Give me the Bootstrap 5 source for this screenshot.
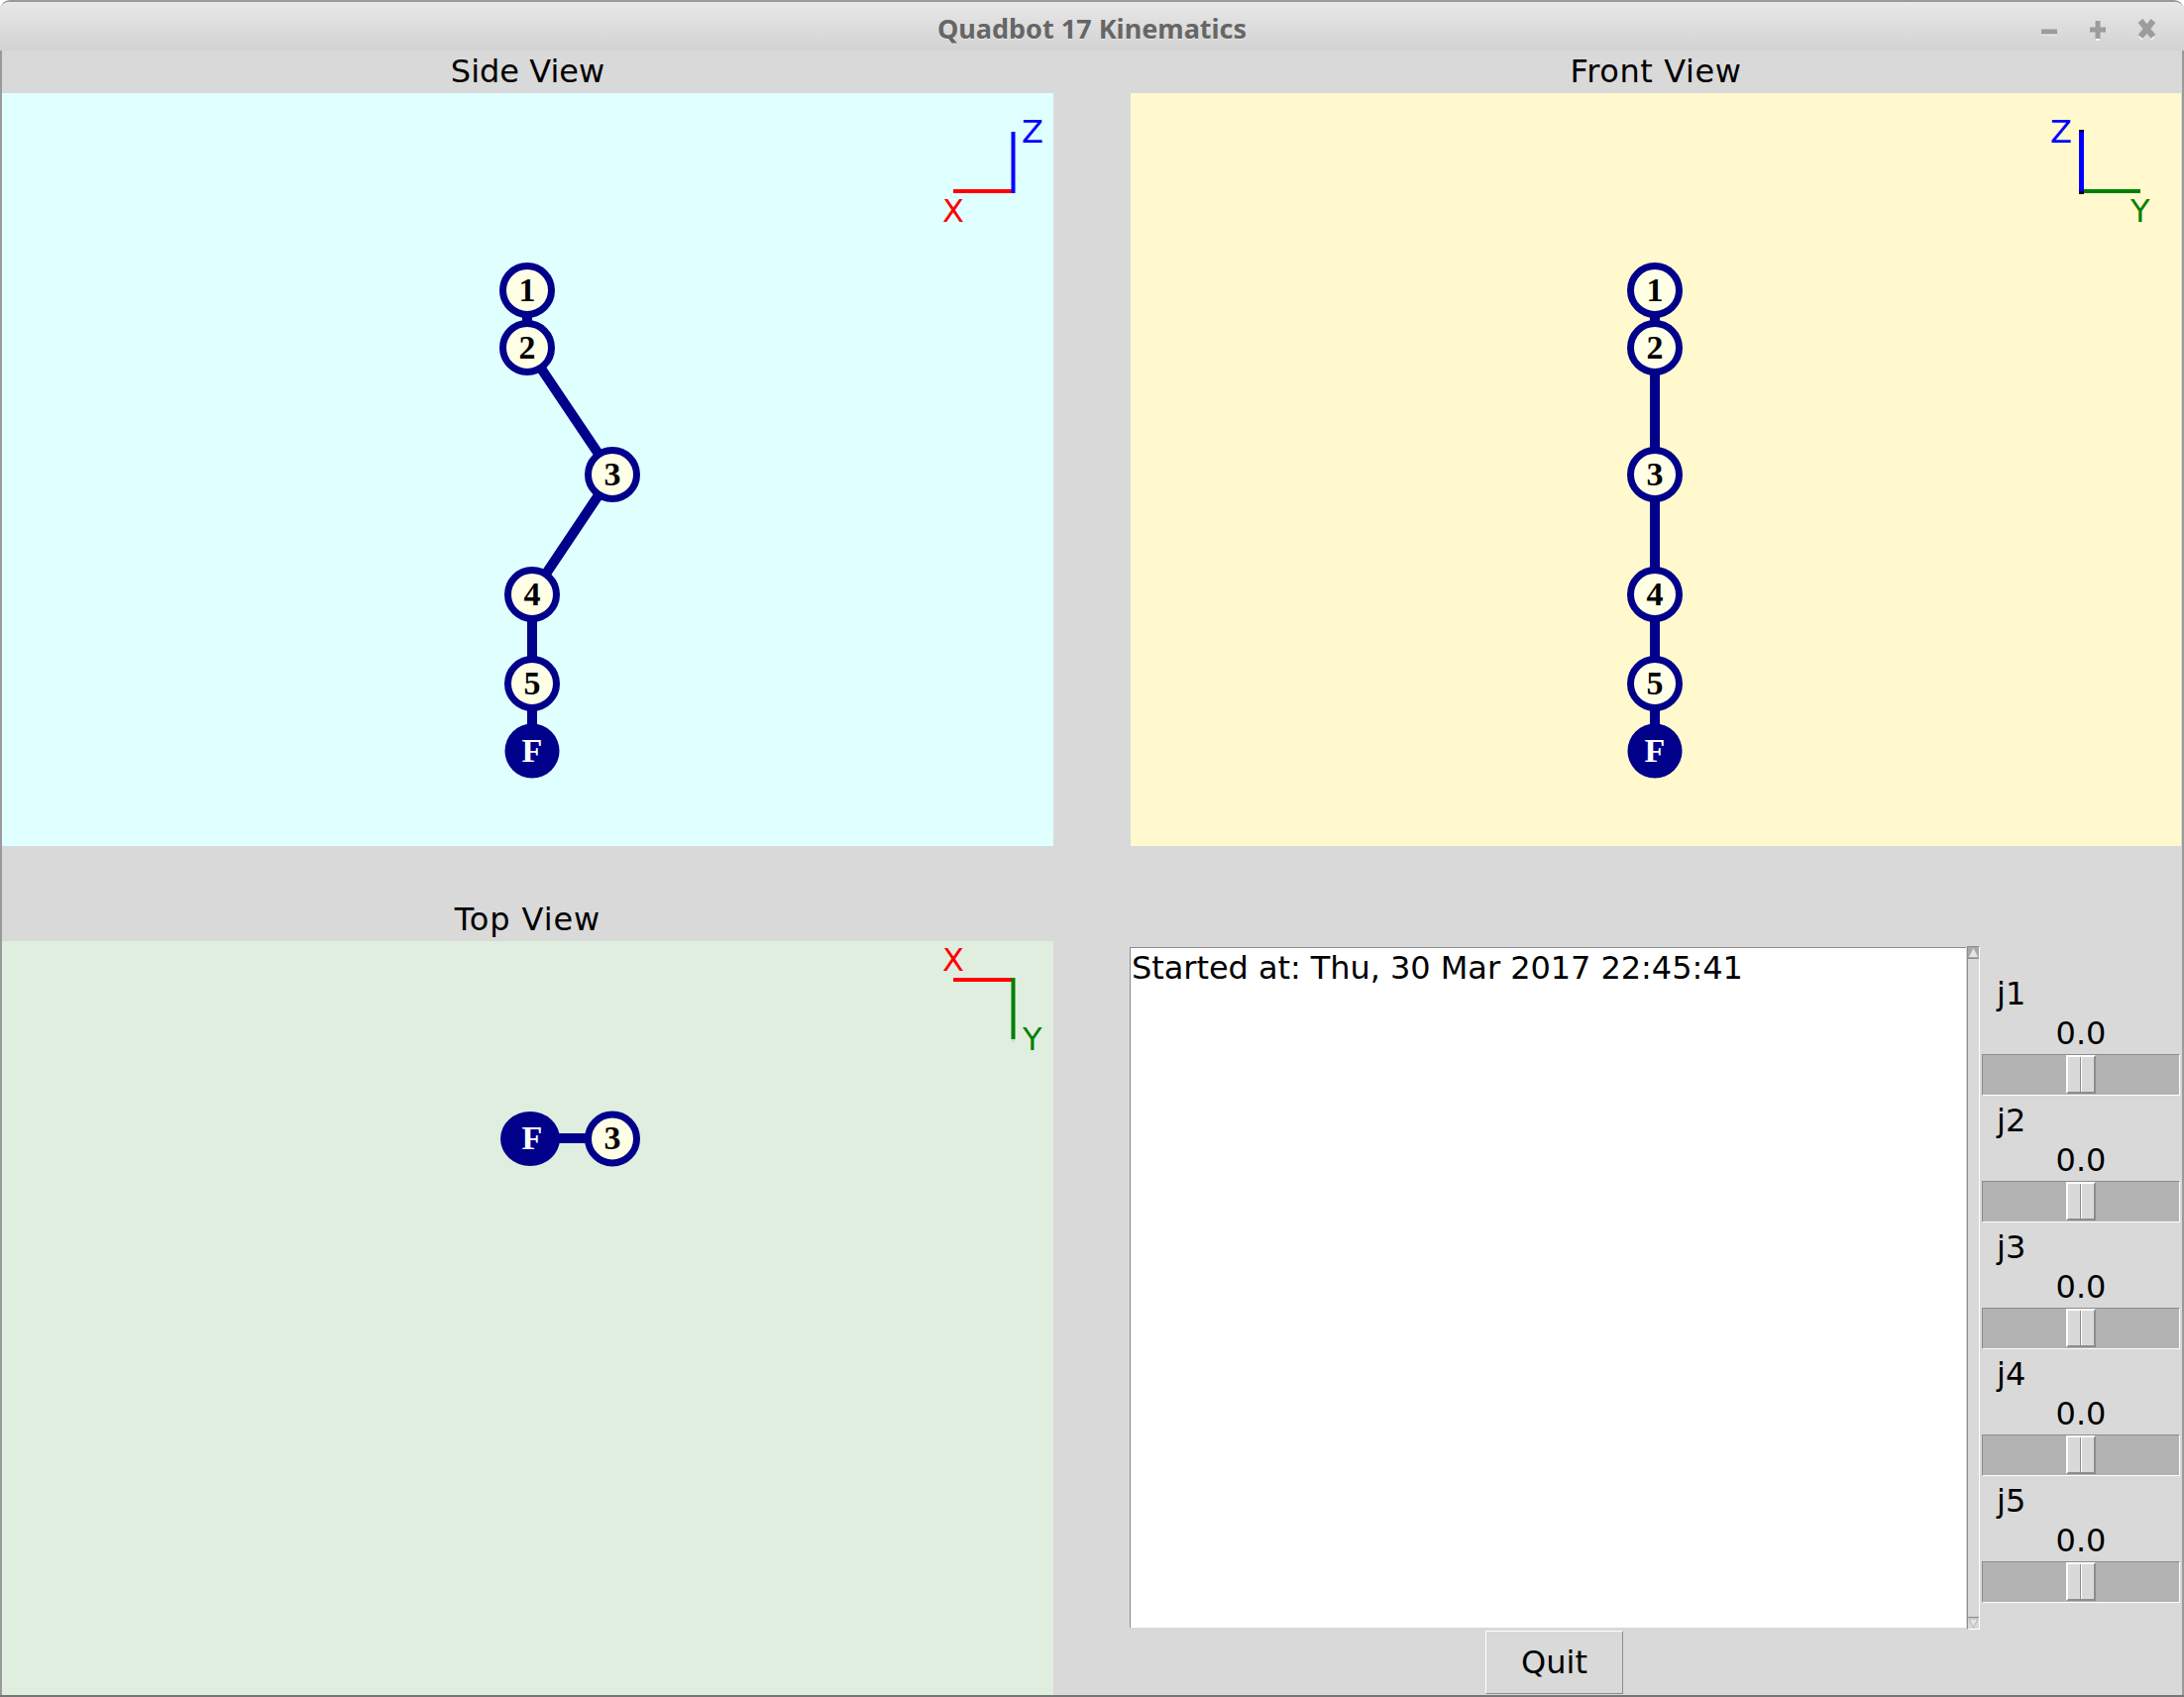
<!DOCTYPE html>
<html lang="en">
<head>
<meta charset="utf-8">
<title>Quadbot 17 Kinematics</title>
<link href="https://cdn.jsdelivr.net/npm/bootstrap@5.3.0/dist/css/bootstrap.min.css" rel="stylesheet">
<style>
html,body{margin:0;height:100%;background:#fff;overflow:hidden}
.tk-window{width:2204px;height:1713px;font-family:"DejaVu Sans",sans-serif;font-size:32px;color:#000;background:#d9d9d9;border-radius:10px 10px 0 0;border-top:2px solid #9a9a9a;border-bottom:2px solid #777;overflow:hidden}
.tk-title{height:49px;background:linear-gradient(#e8e8e8,#d2d2d2);position:relative;flex:none}
.tk-title-text{font-family:"Noto Sans",sans-serif;font-weight:700;font-size:27px;line-height:54px;height:49px;color:#666;text-shadow:0 1px 0 rgba(255,255,255,.35)}
.tk-winbtns{position:absolute;left:2050px;top:14px}
.tk-body{flex:1 1 auto;min-height:0;border-left:2px solid #9a9a9a;border-right:2px solid #9a9a9a;padding-right:1px}
.tk-row-a{height:803px;flex:none}
.tk-row-b{height:804px;flex:none}
.tk-gap{height:53px;flex:none}
.tk-left{width:1061px;flex:none}
.tk-mid{width:78px;flex:none}
.tk-right{width:1060px;flex:none}
.tk-lower{padding-top:48px}
.tk-head{height:43px;line-height:43px;text-align:center;flex:none}
.tk-head-front{letter-spacing:.6px}
.tk-head-top{letter-spacing:.9px}
.tk-canvas{display:block;flex:none}
.tk-cyan{background:#e0ffff}
.tk-yellow{background:#fff9cd}
.tk-green{background:#e0eee0}
.tk-console{height:690px;flex:none}
.tk-text{width:844px;height:687px;margin-top:1px;margin-left:-1px;flex:none;background:#fff;border-top:1px solid #8c8c8c;border-left:1px solid #8c8c8c;padding:0 2px 0 1px;line-height:41px;white-space:pre;letter-spacing:-.05px}
.tk-scroll{width:13px;height:690px;margin-left:1px;flex:none;background:#d9d9d9;border:1px solid #8c8c8c;border-right-color:#fff;border-bottom-color:#fff;display:flex;flex-direction:column;justify-content:space-between}
.tk-sbtn{display:block;width:11px;height:12px;flex:none}
.tk-sliders{width:200px;margin-left:2px;padding-top:23px;flex:none}
.tk-slider-group{height:128px;display:flex;flex-direction:column}
.tk-jlabel{height:44px;line-height:50px;padding-left:15px;flex:none}
.tk-jval{height:42px;line-height:42px;text-align:center;flex:none}
.tk-trough{height:42px;flex:none;background:#b3b3b3;border:1px solid #8c8c8c;border-right-color:#fff;border-bottom-color:#fff;display:flex;justify-content:center}
.tk-thumb{width:30px;height:39px;background:#d9d9d9;border:2px solid #fff;border-right-color:#8c8c8c;border-bottom-color:#8c8c8c;position:relative}
.tk-thumb::after{content:"";position:absolute;left:12px;top:0;bottom:0;width:2px;background:linear-gradient(90deg,#8c8c8c 50%,#fff 50%)}
.tk-quit-row{height:65px;margin-top:1px;flex:none}
.btn.tk-quit{width:139px;height:64px;margin-left:358px;padding:0;background:#d9d9d9;color:#000;font-family:inherit;font-size:32px;border:1px solid;border-color:#fff #8c8c8c #8c8c8c #fff;border-radius:0;line-height:1}
.tk-node-t{font-family:"Liberation Serif",serif;font-weight:700;font-size:34px;text-anchor:middle}
.tk-axis-t{font-family:"DejaVu Sans",sans-serif;font-size:32px}
</style>
</head>
<body>
<div class="tk-window d-flex flex-column">
  <div class="tk-title d-flex justify-content-center">
    <span class="tk-title-text">Quadbot 17 Kinematics</span>
    <svg class="tk-winbtns" width="140" height="28" viewBox="2050 16 140 28">
      <g stroke="#fff" stroke-width="4" fill="none" opacity=".8">
        <path d="M2060 33.500h16M2117 32v9M2160 39l3-3M2173 39l-3-3"/>
      </g>
      <g stroke="#9c9c9c" stroke-width="5" fill="none">
        <path d="M2060 32h16"/>
        <path d="M2109 30h16M2117 21v18"/>
      </g>
      <path d="M2160 21l13 16M2173 21l-13 16" stroke="#9c9c9c" stroke-width="6" fill="none"/>
    </svg>
  </div>
  <div class="tk-body d-flex flex-column">
    <div class="tk-row-a d-flex">
      <div class="tk-left d-flex flex-column">
        <div class="tk-head">Side View</div>
        <svg class="tk-canvas tk-cyan" width="1061" height="760" viewBox="2 94 1061 760">
          <path d="M532 293V351L618 479L537 600V758" fill="none" stroke="#00008b" stroke-width="10"/>
          <g fill="#ffffe6" stroke="#00008b" stroke-width="7">
            <circle cx="532" cy="293" r="24.500"/><circle cx="532" cy="351" r="24.500"/><circle cx="618" cy="479" r="24.500"/><circle cx="537" cy="600" r="24.500"/><circle cx="537" cy="690" r="24.500"/>
          </g>
          <circle cx="537" cy="758" r="27.500" fill="#00008b"/>
          <g class="tk-node-t"><text x="532" y="304">1</text><text x="532" y="362">2</text><text x="618" y="490">3</text><text x="537" y="611">4</text><text x="537" y="701">5</text><text x="537" y="769" fill="#fff">F</text></g>
          <path d="M962 193H1021" stroke="#f00" stroke-width="4"/>
          <path d="M1022.500 133V195" stroke="#00f" stroke-width="4"/>
          <text class="tk-axis-t" x="1031" y="144" fill="#00f">Z</text>
          <text class="tk-axis-t" x="951" y="224" fill="#f00">X</text>
        </svg>
      </div>
      <div class="tk-mid"></div>
      <div class="tk-right d-flex flex-column">
        <div class="tk-head tk-head-front">Front View</div>
        <svg class="tk-canvas tk-yellow" width="1060" height="760" viewBox="1141 94 1060 760">
          <path d="M1670 293V758" fill="none" stroke="#00008b" stroke-width="10"/>
          <g fill="#ffffe6" stroke="#00008b" stroke-width="7">
            <circle cx="1670" cy="293" r="24.500"/><circle cx="1670" cy="351" r="24.500"/><circle cx="1670" cy="479" r="24.500"/><circle cx="1670" cy="600" r="24.500"/><circle cx="1670" cy="690" r="24.500"/>
          </g>
          <circle cx="1670" cy="758" r="27.500" fill="#00008b"/>
          <g class="tk-node-t"><text x="1670" y="304">1</text><text x="1670" y="362">2</text><text x="1670" y="490">3</text><text x="1670" y="611">4</text><text x="1670" y="701">5</text><text x="1670" y="769" fill="#fff">F</text></g>
          <path d="M2103 193H2160" stroke="#008000" stroke-width="4"/>
          <path d="M2100.500 131V196" stroke="#000" stroke-width="5"/>
          <path d="M2100.500 133V193" stroke="#00f" stroke-width="5"/>
          <text class="tk-axis-t" x="2069" y="144" fill="#00f">Z</text>
          <text class="tk-axis-t" x="2150" y="224" fill="#008000">Y</text>
        </svg>
      </div>
    </div>
    <div class="tk-gap"></div>
    <div class="tk-row-b d-flex">
      <div class="tk-left d-flex flex-column">
        <div class="tk-head tk-head-top">Top View</div>
        <svg class="tk-canvas tk-green" width="1061" height="761" viewBox="2 950 1061 761">
          <path d="M535 1149H618" stroke="#00008b" stroke-width="10"/>
          <ellipse cx="535" cy="1149.500" rx="30" ry="27.500" fill="#00008b"/>
          <circle cx="618" cy="1149.500" r="24.500" fill="#ffffe6" stroke="#00008b" stroke-width="7"/>
          <g class="tk-node-t"><text x="618" y="1160">3</text><text x="537" y="1160" fill="#fff">F</text></g>
          <path d="M962 989H1021" stroke="#f00" stroke-width="4"/>
          <path d="M1022.500 987V1049" stroke="#008000" stroke-width="4"/>
          <path d="M1022.500 1049V1052" stroke="#d9d9d9" stroke-width="4"/>
          <text class="tk-axis-t" x="951" y="980" fill="#f00">X</text>
          <text class="tk-axis-t" x="1032" y="1060" fill="#008000">Y</text>
        </svg>
      </div>
      <div class="tk-mid"></div>
      <div class="tk-right tk-lower d-flex flex-column">
        <div class="tk-console d-flex align-items-start">
          <div class="tk-text">Started at: Thu, 30 Mar 2017 22:45:41</div>
          <div class="tk-scroll">
            <svg class="tk-sbtn" viewBox="0 0 11 12"><rect width="11" height="12" fill="#a9a9a9"/><path d="M5.500 1L10 10H1Z" fill="#e4e4e4"/><path d="M0 11.500H11" stroke="#8c8c8c"/></svg>
            <svg class="tk-sbtn" viewBox="0 0 11 12"><rect width="11" height="12" fill="#d9d9d9"/><path d="M5.500 11L10 2H1Z" fill="#e4e4e4" stroke="#999" stroke-width=".6"/><path d="M0 .5H11" stroke="#8c8c8c"/></svg>
          </div>
          <div class="tk-sliders">
            <div class="tk-slider-group"><div class="tk-jlabel">j1</div><div class="tk-jval">0.0</div><div class="tk-trough"><div class="tk-thumb"></div></div></div>
            <div class="tk-slider-group"><div class="tk-jlabel">j2</div><div class="tk-jval">0.0</div><div class="tk-trough"><div class="tk-thumb"></div></div></div>
            <div class="tk-slider-group"><div class="tk-jlabel">j3</div><div class="tk-jval">0.0</div><div class="tk-trough"><div class="tk-thumb"></div></div></div>
            <div class="tk-slider-group"><div class="tk-jlabel">j4</div><div class="tk-jval">0.0</div><div class="tk-trough"><div class="tk-thumb"></div></div></div>
            <div class="tk-slider-group"><div class="tk-jlabel">j5</div><div class="tk-jval">0.0</div><div class="tk-trough"><div class="tk-thumb"></div></div></div>
          </div>
        </div>
        <div class="tk-quit-row"><button type="button" class="btn tk-quit">Quit</button></div>
      </div>
    </div>
  </div>
</div>
<script src="https://cdn.jsdelivr.net/npm/bootstrap@5.3.0/dist/js/bootstrap.bundle.min.js"></script>
</body>
</html>
